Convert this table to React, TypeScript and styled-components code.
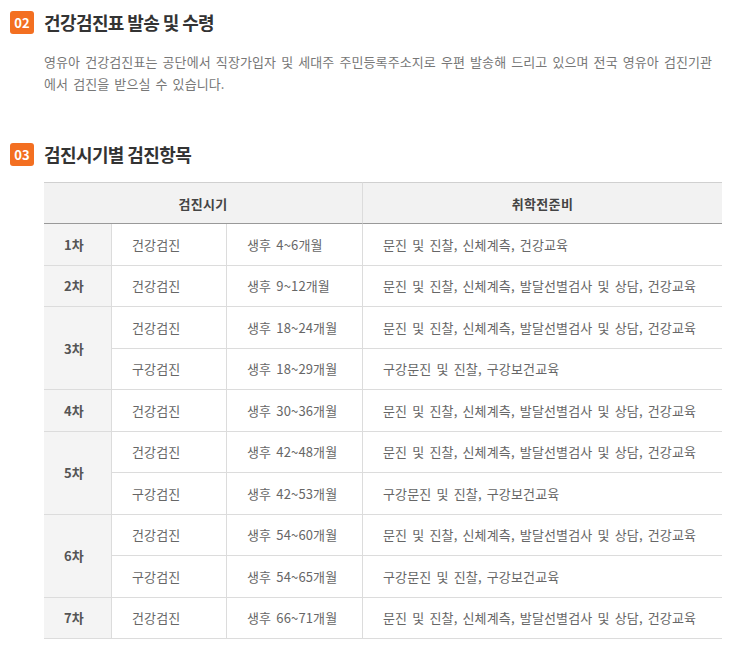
import React from "react";
import styled, { createGlobalStyle } from "styled-components";

const Global = createGlobalStyle`
  html, body { margin: 0; padding: 0; background: #fff; }
  body { font-family: "Noto Sans CJK KR", "Noto Sans", sans-serif; }
  * { box-sizing: border-box; }
`;

const Page = styled.div`
  padding: 11px 18px 24px 10px;
  width: 740px;
`;

const Section = styled.section<{ $gap?: number }>`
  margin-top: ${(p) => p.$gap ?? 0}px;
`;

const SectionHead = styled.div`
  display: flex;
  align-items: center;
  gap: 10px;
  height: 23px;
`;

const Badge = styled.span`
  display: inline-flex;
  align-items: center;
  justify-content: center;
  width: 24px;
  height: 23px;
  border-radius: 3px;
  background: #f36f21;
  color: #fff;
  font-size: 13px;
  font-weight: 700;
  letter-spacing: 0;
`;

const Title = styled.h2`
  margin: 0;
  font-size: 18px;
  font-weight: 700;
  color: #333;
  letter-spacing: -0.6px;
  word-spacing: 0;
  line-height: 23px;
`;

const Body = styled.div<{ $top: number }>`
  margin: ${(p) => p.$top}px 0 0 34px;
`;

const Paragraph = styled.p`
  margin: 0;
  font-size: 13px;
  line-height: 22px;
  color: #777;
  letter-spacing: 0.1px;
  word-spacing: 2px;
`;

const Grid = styled.div`
  display: grid;
  grid-template-columns: 67px 115px 136px 1fr;
  grid-template-rows: 42px repeat(10, 41.5px);
  width: 678px;
  font-size: 13px;
  color: #666;
  letter-spacing: 0.15px;
  word-spacing: 2px;
`;

const HeadCell = styled.div<{ $span: number; $divider?: boolean }>`
  grid-column: span ${(p) => p.$span};
  display: flex;
  align-items: center;
  justify-content: center;
  background: #f2f2f2;
  border-top: 1px solid #d0d0d0;
  border-bottom: 1px solid #999;
  border-left: ${(p) => (p.$divider ? "1px solid #dcdcdc" : "none")};
  color: #444;
  font-weight: 700;
  letter-spacing: 0.3px;
`;

const Cell = styled.div<{ $rows?: number; $stage?: boolean; $divider?: boolean }>`
  grid-row: span ${(p) => p.$rows ?? 1};
  display: flex;
  align-items: center;
  padding-left: 20px;
  border-bottom: 1px solid #dcdcdc;
  border-left: ${(p) => (p.$divider ? "1px solid #dcdcdc" : "none")};
  background: ${(p) => (p.$stage ? "#f4f4f4" : "#fff")};
  color: ${(p) => (p.$stage ? "#555" : "#666")};
  font-weight: ${(p) => (p.$stage ? 700 : 400)};
  white-space: nowrap;
`;

type Exam = { kind: string; age: string; items: string };
type Stage = { label: string; exams: Exam[] };

const FULL = "문진 및 진찰, 신체계측, 발달선별검사 및 상담, 건강교육";
const ORAL = "구강문진 및 진찰, 구강보건교육";

const stages: Stage[] = [
  { label: "1차", exams: [{ kind: "건강검진", age: "생후 4~6개월", items: "문진 및 진찰, 신체계측, 건강교육" }] },
  { label: "2차", exams: [{ kind: "건강검진", age: "생후 9~12개월", items: FULL }] },
  {
    label: "3차",
    exams: [
      { kind: "건강검진", age: "생후 18~24개월", items: FULL },
      { kind: "구강검진", age: "생후 18~29개월", items: ORAL },
    ],
  },
  { label: "4차", exams: [{ kind: "건강검진", age: "생후 30~36개월", items: FULL }] },
  {
    label: "5차",
    exams: [
      { kind: "건강검진", age: "생후 42~48개월", items: FULL },
      { kind: "구강검진", age: "생후 42~53개월", items: ORAL },
    ],
  },
  {
    label: "6차",
    exams: [
      { kind: "건강검진", age: "생후 54~60개월", items: FULL },
      { kind: "구강검진", age: "생후 54~65개월", items: ORAL },
    ],
  },
  { label: "7차", exams: [{ kind: "건강검진", age: "생후 66~71개월", items: FULL }] },
];

export default function App() {
  return (
    <>
      <Global />
      <Page>
        <Section>
          <SectionHead>
            <Badge>02</Badge>
            <Title>건강검진표 발송 및 수령</Title>
          </SectionHead>
          <Body $top={17}>
            <Paragraph>
              영유아 건강검진표는 공단에서 직장가입자 및 세대주 주민등록주소지로 우편 발송해 드리고 있으며 전국 영유아 검진기관에서 검진을 받으실 수 있습니다.
            </Paragraph>
          </Body>
        </Section>
        <Section $gap={48}>
          <SectionHead>
            <Badge>03</Badge>
            <Title>검진시기별 검진항목</Title>
          </SectionHead>
          <Body $top={16}>
            <Grid>
              <HeadCell $span={3}>검진시기</HeadCell>
              <HeadCell $span={1} $divider>
                취학전준비
              </HeadCell>
              {stages.map((s) => (
                <React.Fragment key={s.label}>
                  <Cell $rows={s.exams.length} $stage>
                    {s.label}
                  </Cell>
                  {s.exams.map((e, i) => (
                    <React.Fragment key={i}>
                      <Cell $divider>{e.kind}</Cell>
                      <Cell $divider>{e.age}</Cell>
                      <Cell $divider>{e.items}</Cell>
                    </React.Fragment>
                  ))}
                </React.Fragment>
              ))}
            </Grid>
          </Body>
        </Section>
      </Page>
    </>
  );
}
